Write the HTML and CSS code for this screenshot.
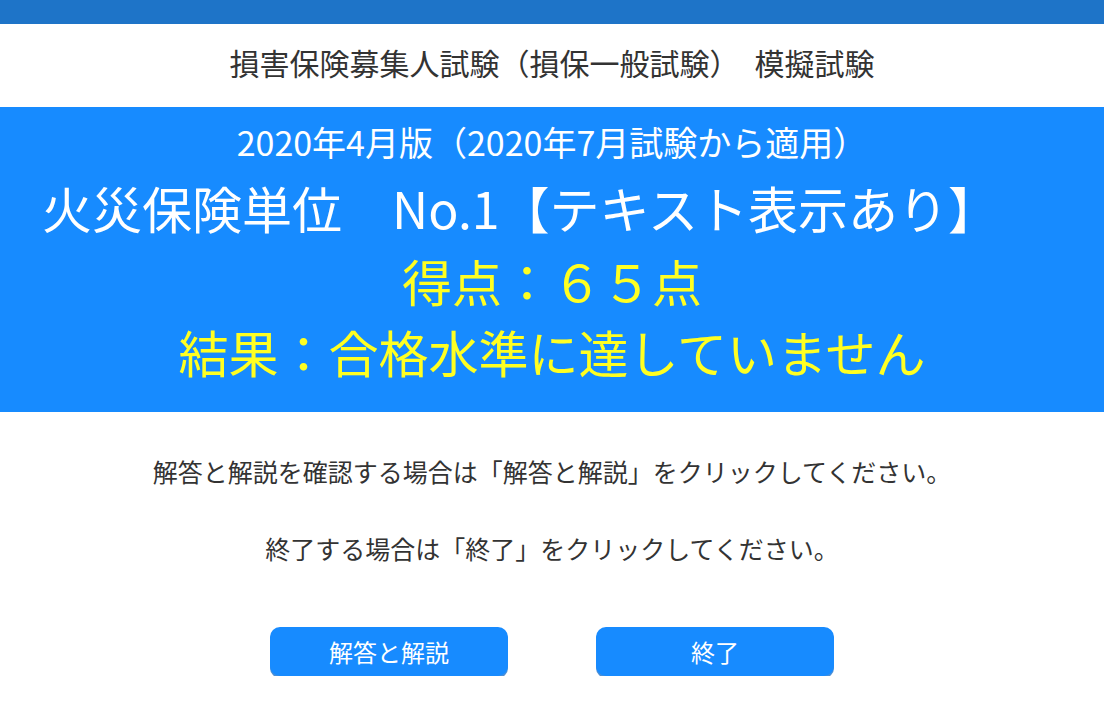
FILE: index.html
```html
<!DOCTYPE html>
<html lang="ja">
<head>
<meta charset="utf-8">
<title>模擬試験 結果</title>
<link rel="stylesheet" href="styles.css">
</head>
<body>
<div class="topbar"></div>
<header class="header">
  <h1 class="title">損害保険募集人試験（損保一般試験）　模擬試験</h1>
</header>
<section class="panel">
  <div class="edition">2020年4月版（2020年7月試験から適用）</div>
  <div class="unit">火災保険単位　No.1【テキスト表示あり】</div>
  <div class="score">得点：６５点</div>
  <div class="result">結果：合格水準に達していません</div>
</section>
<main class="content">
  <p class="msg msg-first">解答と解説を確認する場合は「解答と解説」をクリックしてください。</p>
  <p class="msg msg-second">終了する場合は「終了」をクリックしてください。</p>
  <div class="buttons">
    <button class="btn" type="button">解答と解説</button>
    <button class="btn" type="button">終了</button>
  </div>
</main>
</body>
</html>
```

FILE: styles.css
```css
html, body {
  margin: 0;
  padding: 0;
  background: #ffffff;
}
body {
  font-family: "Noto Sans CJK JP", "Noto Sans", sans-serif;
  color: #333333;
  width: 1104px;
  overflow: hidden;
}
.topbar {
  height: 24px;
  background: #1e74c8;
}
.header {
  height: 83px;
  box-sizing: border-box;
  padding-bottom: 7px;
  display: flex;
  align-items: center;
  justify-content: center;
}
.title {
  margin: 0;
  font-size: 30px;
  font-weight: normal;
  line-height: 40px;
  color: #333333;
}
.panel {
  background: #178bff;
  height: 305px;
  box-sizing: border-box;
  padding-top: 15px;
}
.edition {
  color: #ffffff;
  font-size: 34px;
  line-height: 40px;
  text-align: center;
}
.unit {
  color: #ffffff;
  font-size: 50px;
  line-height: 90px;
  padding-left: 42px;
  white-space: nowrap;
}
.score {
  color: #ffff22;
  font-size: 50px;
  line-height: 56px;
  text-align: center;
}
.result {
  color: #ffff22;
  font-size: 50px;
  line-height: 86px;
  text-align: center;
}
.content {
  padding-top: 41px;
  display: flex;
  flex-direction: column;
  align-items: center;
}
.msg {
  margin: 0;
  font-size: 25px;
  line-height: 36px;
  color: #333333;
  text-align: center;
}
.msg-second {
  margin-top: 41px;
}
.buttons {
  margin-top: 61px;
  display: flex;
  justify-content: center;
  gap: 88px;
}
.btn {
  width: 238px;
  height: 49px;
  border: none;
  border-radius: 10px;
  background: #178bff;
  color: #ffffff;
  font-family: "Noto Sans CJK JP", "Noto Sans", sans-serif;
  font-size: 24px;
  line-height: 49px;
  box-shadow: 0 2px 0 #4b8fd6;
  padding: 0;
  cursor: pointer;
}
```
